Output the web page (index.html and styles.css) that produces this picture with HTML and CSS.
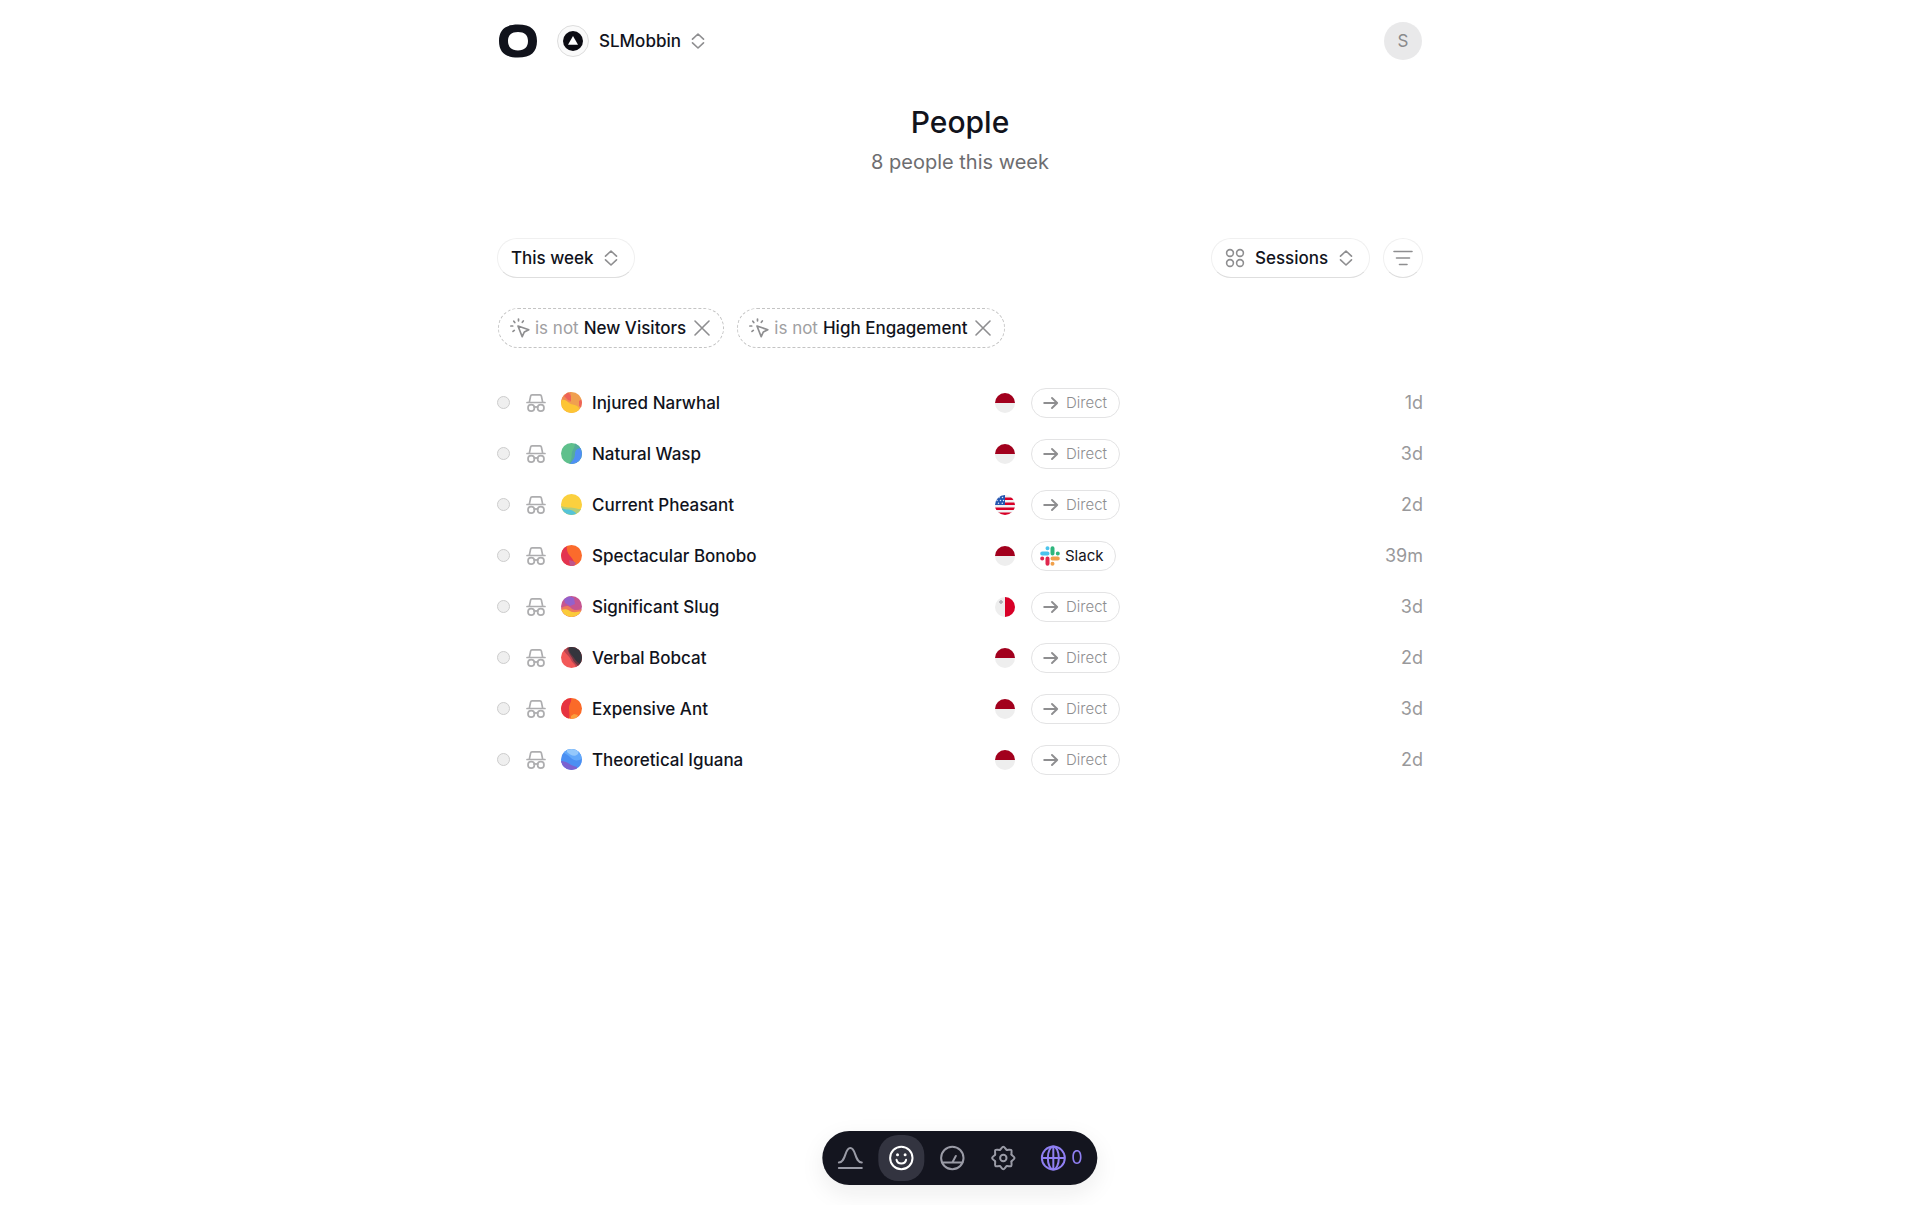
FILE: index.html
```
<!DOCTYPE html>
<html lang="en">
<head>
<meta charset="utf-8">
<meta name="viewport" content="width=device-width, initial-scale=1">
<title>People</title>
<link rel="stylesheet" href="styles.css">
</head>
<body>
<svg class="defs" aria-hidden="true">
  <symbol id="i-updown" viewBox="0 0 14 16"><path d="M1.500 6.200 7 1l5.500 5.200M1.500 9.800 7 15l5.500-5.200" fill="none" stroke="currentColor" stroke-width="1.600" stroke-linecap="round" stroke-linejoin="round"/></symbol>
  <symbol id="i-click" viewBox="0 0 20 20"><g fill="none" stroke="currentColor" stroke-width="1.700" stroke-linecap="round" stroke-linejoin="round"><path d="m8 8 10.800 3.800-4.500 2.200-2.100 4.700z"/><path d="M8.500 1v1.800M3.800 3.200l1 1.300M13.300 3l-1 1.300M.9 8h1.800M3 13.400l1.300-1"/></g></symbol>
  <symbol id="i-close" viewBox="0 0 16 16"><path d="M1 1l14 14M15 1 1 15" fill="none" stroke="currentColor" stroke-width="1.600" stroke-linecap="round"/></symbol>
  <symbol id="i-incognito" viewBox="0 0 20 18"><g fill="none" stroke="currentColor" stroke-width="1.700" stroke-linecap="round" stroke-linejoin="round"><path d="M1 8.500h18M3.300 8.300l1.300-6.200a1.500 1.500 0 0 1 1.500-1.200h7.800a1.500 1.500 0 0 1 1.500 1.200l1.300 6.200M8.300 13.300c1-.6 2.400-.6 3.400 0"/><circle cx="5.200" cy="13.900" r="3.200"/><circle cx="14.800" cy="13.900" r="3.200"/></g></symbol>
  <symbol id="i-arrow" viewBox="0 0 16 14"><path d="M1.200 7h13M9 2l5.200 5L9 12" fill="none" stroke="currentColor" stroke-width="1.900" stroke-linecap="round" stroke-linejoin="round"/></symbol>
  <symbol id="f-id" viewBox="0 0 20 20"><circle cx="10" cy="10" r="10" fill="#eee"/><path d="M0 10a10 10 0 0 1 20 0z" fill="#a2001d"/></symbol>
  <path id="tooth" d="M9.600 4.800C10.800 4.300 11.600 1.800 13 1.800s2.200 2.500 3.400 3"/>
</svg>

<div class="page">
  <header class="topbar">
    <a class="logo" href="#" aria-label="Home"><svg width="38" height="34" viewBox="0 0 38 34"><path fill="#11131c" fill-rule="evenodd" d="M19 .5C32 .5 38 6 38 17s-6 16.500-19 16.500S0 28 0 17 6 .5 19 .5zM19 8C12.500 8 9 11 9 17s3.500 9.500 10 9.500S29 23 29 17s-3.500-9-10-9z"/></svg></a>
    <button class="workspace" type="button">
      <span class="ws-badge"><svg width="20" height="20" viewBox="0 0 20 20"><circle cx="10" cy="10" r="10" fill="#0b0b12"/><path d="M10 5l5 8.800H5z" fill="#fff"/></svg></span>
      <span>SLMobbin</span>
      <svg class="updown" width="14" height="16"><use href="#i-updown"/></svg>
    </button>
    <button class="account" type="button" aria-label="Account">S</button>
  </header>

  <main>
    <div class="heading">
      <h1>People</h1>
      <p>8 people this week</p>
    </div>

    <div class="toolbar">
      <div class="pill">
        <select aria-label="Period"><option>This week</option></select>
        <svg class="updown" width="14" height="16"><use href="#i-updown"/></svg>
      </div>
      <div class="toolbar-end">
        <div class="pill">
          <svg width="20" height="20" viewBox="0 0 20 20" fill="none" stroke="#8e8e90" stroke-width="1.600"><circle cx="5" cy="5" r="3.400"/><circle cx="15" cy="5" r="3.400"/><circle cx="5" cy="15" r="3.400"/><circle cx="15" cy="15" r="3.400"/></svg>
          <select aria-label="Sort by"><option>Sessions</option></select>
          <svg class="updown" width="14" height="16"><use href="#i-updown"/></svg>
        </div>
        <button class="round" type="button" aria-label="Filter"><svg width="20" height="16" viewBox="0 0 20 16" fill="none" stroke="#8e8e90" stroke-width="1.600" stroke-linecap="round"><path d="M1 1.500h18M3.500 8h13M6.500 14.500h7.500"/></svg></button>
      </div>
    </div>

    <div class="filters">
      <div class="filter"><svg width="20" height="20"><use href="#i-click"/></svg><span class="op">is not</span><span>New Visitors</span><button type="button" aria-label="Remove New Visitors"><svg width="16" height="16"><use href="#i-close"/></svg></button></div>
      <div class="filter"><svg width="20" height="20"><use href="#i-click"/></svg><span class="op">is not</span><span>High Engagement</span><button type="button" aria-label="Remove High Engagement"><svg width="16" height="16"><use href="#i-close"/></svg></button></div>
    </div>

    <table class="people">
      <tbody>
        <tr>
          <td><div class="person"><i class="dot"></i><svg class="incognito" width="20" height="18"><use href="#i-incognito"/></svg><svg class="avatar" width="21" height="21" viewBox="0 0 21 21"><path fill="#f0a050" d="M0 0h21v21H0z"/><path fill="#f08a52" d="M0 5 5 0h5v10H0z"/><path fill="#ee6358" d="M3 4 7 0l3 4v5L7 8zM18 9l3-2v9l-3-2z"/><path fill="#fdc535" d="M0 8c4-1 6 1 8 3s5 1 8 3 2 4 2 7H0z"/></svg><span>Injured Narwhal</span></div></td>
          <td><div class="origin"><svg width="20" height="20"><use href="#f-id"/></svg><span class="source"><svg width="16" height="14"><use href="#i-arrow"/></svg>Direct</span></div></td>
          <td class="when">1d</td>
        </tr>
        <tr>
          <td><div class="person"><i class="dot"></i><svg class="incognito" width="20" height="18"><use href="#i-incognito"/></svg><svg class="avatar" width="21" height="21" viewBox="0 0 21 21"><path fill="#5fc08c" d="M0 0h21v21H0z"/><path fill="#55ac9c" d="M14 0h7v21H7c5-4 3-8 4-12 1-3 3-5 3-9z"/><path fill="#4f8ff5" d="M21 5c-5 0-7 2-7 6s-2 6-5 10h12z"/></svg><span>Natural Wasp</span></div></td>
          <td><div class="origin"><svg width="20" height="20"><use href="#f-id"/></svg><span class="source"><svg width="16" height="14"><use href="#i-arrow"/></svg>Direct</span></div></td>
          <td class="when">3d</td>
        </tr>
        <tr>
          <td><div class="person"><i class="dot"></i><svg class="incognito" width="20" height="18"><use href="#i-incognito"/></svg><svg class="avatar" width="21" height="21" viewBox="0 0 21 21"><path fill="#fbd03e" d="M0 0h21v21H0z"/><path fill="#b3cd78" d="M0 12c5 2 9 1 13 2s5 1 8 1v6H0z"/><path fill="#55c4d8" d="M0 14c4 2 7 1 10 2s4 2 6 5H0z"/></svg><span>Current Pheasant</span></div></td>
          <td><div class="origin"><svg width="20" height="20" viewBox="0 0 20 20"><clipPath id="c"><circle cx="10" cy="10" r="10"/></clipPath><g clip-path="url(#c)"><path fill="#f1f1f3" d="M0 0h20v20H0z"/><path d="M9 3.700h11M9 8.700h11M0 13.700h20M0 18.700h20" stroke="#d80027" stroke-width="2.500"/><path fill="#2455b0" d="M0 0h10v10H0z"/><path d="M4 2.500v.01M7.500 2.500v.01M2 5.500v.01M5.500 5.500v.01M8.500 5.500v.01M3.500 8.300v.01M7.300 8.300v.01" stroke="#dfe8fa" stroke-width="1.500" stroke-linecap="round"/></g></svg><span class="source"><svg width="16" height="14"><use href="#i-arrow"/></svg>Direct</span></div></td>
          <td class="when">2d</td>
        </tr>
        <tr>
          <td><div class="person"><i class="dot"></i><svg class="incognito" width="20" height="18"><use href="#i-incognito"/></svg><svg class="avatar" width="21" height="21" viewBox="0 0 21 21"><path fill="#fb6b2c" d="M0 0h21v21H0z"/><path fill="#e33350" d="M0 0h6c-1 5 1 9 4 12 2 3 4 5 4 9H0z"/><path fill="#c0558a" d="m8 15 4 1 3 2-2 3H9z"/></svg><span>Spectacular Bonobo</span></div></td>
          <td><div class="origin"><svg width="20" height="20"><use href="#f-id"/></svg><span class="source named"><svg width="20" height="20" viewBox="0 0 20 20" fill="none" stroke-width="4" stroke-linecap="round"><path d="M2.200 7.500h5.300M7.500 2.200v.01" stroke="#4cc4ec"/><path d="M12.500 2.200v5.300M17.800 7.500v.01" stroke="#2eb67d"/><path d="M17.800 12.500h-5.300M12.500 17.800v.01" stroke="#f0a04b"/><path d="M7.500 17.800v-5.300M2.200 12.500v.01" stroke="#e0284e"/></svg>Slack</span></div></td>
          <td class="when">39m</td>
        </tr>
        <tr>
          <td><div class="person"><i class="dot"></i><svg class="incognito" width="20" height="18"><use href="#i-incognito"/></svg><svg class="avatar" width="21" height="21" viewBox="0 0 21 21"><path fill="#c65590" d="M0 0h21v21H0z"/><path fill="#9461cc" d="M3 3 8 0l5 2 1 6-5 2-5-3z"/><path fill="#ee7a5c" d="M0 12c4-2 7-3 10 0s7 2 11 1v8H0z"/><path fill="#fbcb3a" d="M0 14c4-1 6-1 9 1s7 1 12 0v6H0z"/></svg><span>Significant Slug</span></div></td>
          <td><div class="origin"><svg width="20" height="20" viewBox="0 0 20 20"><circle cx="10" cy="10" r="10" fill="#eee"/><path d="M10 0a10 10 0 0 1 0 20z" fill="#d80027"/><path d="M6 3v4M4 5h4" stroke="#acabb1" stroke-width="1.500"/></svg><span class="source"><svg width="16" height="14"><use href="#i-arrow"/></svg>Direct</span></div></td>
          <td class="when">3d</td>
        </tr>
        <tr>
          <td><div class="person"><i class="dot"></i><svg class="incognito" width="20" height="18"><use href="#i-incognito"/></svg><svg class="avatar" width="21" height="21" viewBox="0 0 21 21"><path fill="#f25858" d="M0 0h21v21H0z"/><path fill="#b84450" d="M3 0h18v21h-6c0-4-4-5-5-8S5 7 3 4z"/><path fill="#6b3742" d="M6 0h15v21h-4c1-3-4-5-5-8S7 6 6 0z"/><path fill="#34353d" d="M8 0h13v18c-3-1-6-4-8-7S7 5 8 0z"/></svg><span>Verbal Bobcat</span></div></td>
          <td><div class="origin"><svg width="20" height="20"><use href="#f-id"/></svg><span class="source"><svg width="16" height="14"><use href="#i-arrow"/></svg>Direct</span></div></td>
          <td class="when">2d</td>
        </tr>
        <tr>
          <td><div class="person"><i class="dot"></i><svg class="incognito" width="20" height="18"><use href="#i-incognito"/></svg><svg class="avatar" width="21" height="21" viewBox="0 0 21 21"><path fill="#fb6a28" d="M0 0h21v21H0z"/><path fill="#e63340" d="M0 0h10c1 4-2 6-2 10s1 7 0 11H0z"/><path fill="#fba03c" d="m10 18 3-2 4 1-2 4h-5z"/></svg><span>Expensive Ant</span></div></td>
          <td><div class="origin"><svg width="20" height="20"><use href="#f-id"/></svg><span class="source"><svg width="16" height="14"><use href="#i-arrow"/></svg>Direct</span></div></td>
          <td class="when">3d</td>
        </tr>
        <tr>
          <td><div class="person"><i class="dot"></i><svg class="incognito" width="20" height="18"><use href="#i-incognito"/></svg><svg class="avatar" width="21" height="21" viewBox="0 0 21 21"><path fill="#4a8ff2" d="M0 0h21v21H0z"/><path fill="#62a8fa" d="M3 0h18v10c-4 2-8 2-11-1S5 5 3 4z"/><path fill="#94c8fb" d="M6 0h12l-1 5c-3 3-7 2-11-2z"/><path fill="#7a62d0" d="M0 12c3 0 5 1 7 2s4 3 9 4v3H0z"/></svg><span>Theoretical Iguana</span></div></td>
          <td><div class="origin"><svg width="20" height="20"><use href="#f-id"/></svg><span class="source"><svg width="16" height="14"><use href="#i-arrow"/></svg>Direct</span></div></td>
          <td class="when">2d</td>
        </tr>
      </tbody>
    </table>
  </main>
</div>

<nav class="dock" aria-label="Main">
  <a href="#" aria-label="Insights"><svg width="26" height="26" viewBox="0 0 26 26"><path d="M1.500 17.500C9 17.500 7 3 13 3s4 14.500 11.500 14.500M1.500 23h23"/></svg></a>
  <a href="#" class="active" aria-label="People" aria-current="page"><svg width="26" height="26" viewBox="0 0 26 26"><circle cx="13" cy="13" r="11.200"/><path d="M8.200 14.800c1 5 8.600 5 9.600 0"/><path d="M9.200 9.800v.01M16.800 9.800v.01" stroke-width="3"/></svg></a>
  <a href="#" aria-label="Dashboard"><svg width="26" height="26" viewBox="0 0 26 26"><circle cx="13" cy="13" r="11.200"/><path d="M3 17.500h20M13 17.500l3.500-6.500"/></svg></a>
  <a href="#" aria-label="Settings"><svg width="26" height="26" viewBox="0 0 26 26"><use href="#tooth"/><use href="#tooth" transform="rotate(45 13 13)"/><use href="#tooth" transform="rotate(90 13 13)"/><use href="#tooth" transform="rotate(135 13 13)"/><use href="#tooth" transform="rotate(180 13 13)"/><use href="#tooth" transform="rotate(225 13 13)"/><use href="#tooth" transform="rotate(270 13 13)"/><use href="#tooth" transform="rotate(315 13 13)"/><circle cx="13" cy="13" r="3.200"/></svg></a>
  <a href="#" class="live" aria-label="Live visitors"><svg width="26" height="26" viewBox="0 0 26 26"><circle cx="13" cy="13" r="11.500"/><ellipse cx="13" cy="13" rx="5.500" ry="11.500"/><path d="M2 13h22M13 2v22"/></svg><span>0</span></a>
</nav>
</body>
</html>
```
FILE: styles.css
```
* { box-sizing: border-box; }
body {
  margin: 0;
  background: #fff;
  color: #11131c;
  font: 400 17px/24px Inter, "Liberation Sans", sans-serif;
}
svg { display: block; flex: none; }
.defs { position: absolute; width: 0; height: 0; overflow: hidden; }
button, select { font: inherit; color: inherit; background: none; border: 0; padding: 0; margin: 0; cursor: pointer; }
a { color: inherit; text-decoration: none; }
.page { width: 100%; max-width: 974px; margin: 0 auto; padding: 0 24px 120px; }

.topbar { display: flex; align-items: center; gap: 20px; height: 82px; padding: 0 1px 0 2px; }
.workspace { display: flex; align-items: center; gap: 10px; font-weight: 500; }
.ws-badge { display: grid; place-items: center; width: 32px; height: 32px; border: 1px solid #ddd; border-radius: 50%; background: #fafafa; }
.updown { color: #8e8e90; }
.account { margin-left: auto; width: 38px; height: 38px; border-radius: 50%; background: #e9e9ea; color: #8a8a8c; }

.heading { text-align: center; padding: 20px 0 62px; }
.heading h1 { margin: 0; font-size: 30px; line-height: 40px; font-weight: 500; }
.heading p { margin: 6px 0 0; font-size: 20px; line-height: 28px; color: #6d6d70; }

.toolbar, .toolbar-end, .filters, .filter, .pill, .person, .origin, .source { display: flex; align-items: center; }
.toolbar { justify-content: space-between; }
.toolbar-end { gap: 13px; }
.pill, .round { height: 40px; border-radius: 20px; background: #fff; border: 1px solid #f0f0f0; border-bottom-color: #dedede; }
.pill { gap: 10px; padding: 0 16px 0 13px; }
.pill select { appearance: none; font-weight: 500; }
.round { display: grid; place-items: center; width: 40px; }

.filters { gap: 13px; padding: 30px 0 29px 1px; }
.filter { gap: 5px; height: 40px; padding: 0 13px 0 11px; border: 1px dashed #c4c4c4; border-radius: 20px; }
.filter svg { color: #8e8e90; }
.filter span { font-weight: 500; }
.filter .op { font-weight: 400; color: #a0a0a2; }
.filter button { padding-left: 3px; }

.people { width: 100%; border-collapse: collapse; table-layout: fixed; }
.people td { height: 51px; padding: 0; }
.people td:first-child { width: 498px; }
.person { font-weight: 500; }
.dot { width: 13px; height: 13px; margin-right: 16px; border: 1px solid #cdcdcd; border-radius: 50%; background: #efefef; }
.incognito { color: #adadaf; margin-right: 15px; }
.avatar { margin-right: 10px; border-radius: 50%; overflow: hidden; }
.origin { gap: 16px; }
.source { gap: 7px; height: 30px; padding: 0 12px 0 11px; border: 1px solid #e3e3e4; border-radius: 15px; font-size: 15px; line-height: 20px; font-weight: 300; color: #8e8e90; }
.source.named { padding-left: 8px; gap: 5px; font-weight: 400; color: #11131c; }
.people .when { text-align: right; font-size: 18px; color: #99999b; }

.dock { position: fixed; bottom: 20px; left: 50%; transform: translateX(-50%); display: flex; align-items: center; gap: 5px; height: 54px; padding: 0 15px 0 5px; border-radius: 27px; background: #14151f; box-shadow: 0 8px 24px rgba(20, 21, 31, .08); color: #9a9ba6; font-size: 18px; }
.dock a { display: flex; align-items: center; justify-content: center; width: 46px; height: 46px; border-radius: 20px; }
.dock svg { fill: none; stroke: currentColor; stroke-width: 2; stroke-linecap: round; stroke-linejoin: round; }
.dock .active { background: #333440; color: #fff; }
.dock .live { width: auto; gap: 5px; padding-left: 9px; color: #8f7ff2; }
```
